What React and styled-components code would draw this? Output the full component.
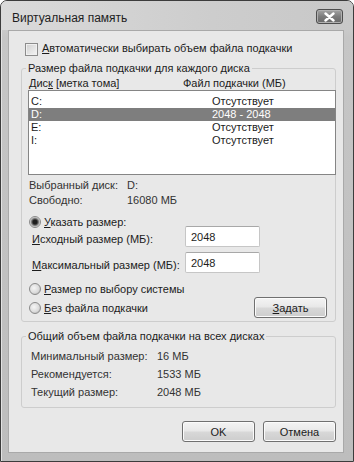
import styled, { createGlobalStyle } from "styled-components";

const GlobalStyle = createGlobalStyle`
  html, body {
    margin: 0;
    padding: 0;
    background: #ffffff;
  }
  body {
    font-family: "Liberation Sans", Arial, sans-serif;
    font-size: 11px;
    color: #1c1c1c;
  }
  * { box-sizing: border-box; }
`;

const drives = [
  { name: "C:", size: "Отсутствует" },
  { name: "D:", size: "2048 - 2048", selected: true },
  { name: "E:", size: "Отсутствует" },
  { name: "I:", size: "Отсутствует" },
];

const totals = [
  ["Минимальный размер:", "16 МБ"],
  ["Рекомендуется:", "1533 МБ"],
  ["Текущий размер:", "2048 МБ"],
];

export default function App() {
  return (
    <>
      <GlobalStyle />
      <Window>
        <TitleBar>
          <Title>Виртуальная память</Title>
          <CloseButton>
            <svg width="13" height="10" viewBox="0 0 13 10">
              <path d="M2.5 1.5 L10.5 8.5 M10.5 1.5 L2.5 8.5" stroke="#fff" strokeWidth="2.4" strokeLinecap="round" />
            </svg>
          </CloseButton>
        </TitleBar>

        <Client>
          <CheckRow>
            <CheckBox />
            <span>
              <U>А</U>втоматически выбирать объем файла подкачки
            </span>
          </CheckRow>

          <Group $mt={6} $pb={3}>
            <Legend>Размер файла подкачки для каждого диска</Legend>
            <HeaderRow>
              <span>
                Дис<U>к</U> [метка тома]
              </span>
              <span>Файл подкачки (МБ)</span>
            </HeaderRow>
            <ListBox>
              {drives.map((d) => (
                <DriveRow key={d.name} $selected={d.selected}>
                  <span>{d.name}</span>
                  <span>{d.size}</span>
                </DriveRow>
              ))}
            </ListBox>

            <InfoGrid>
              <span>Выбранный диск:</span>
              <span>D:</span>
              <span>Свободно:</span>
              <span>16080 МБ</span>
            </InfoGrid>

            <RadioRow $mt={7}>
              <Radio $checked />
              <span>
                <U>У</U>казать размер:
              </span>
            </RadioRow>

            <FieldRow $mt={-2}>
              <span>
                <U>И</U>сходный размер (МБ):
              </span>
              <Input defaultValue="2048" />
            </FieldRow>
            <FieldRow $mt={5}>
              <span>
                <U>М</U>аксимальный размер (МБ):
              </span>
              <Input defaultValue="2048" />
            </FieldRow>

            <RadioRow $mt={9}>
              <Radio />
              <span>
                <U>Р</U>азмер по выбору системы
              </span>
            </RadioRow>
            <LastRow>
              <RadioRow $mt={0}>
                <Radio />
                <span>
                  <U>Б</U>ез файла подкачки
                </span>
              </RadioRow>
              <Button $mr={8}>
                <U>З</U>адать
              </Button>
            </LastRow>
          </Group>

          <Group $mt={7} $pb={6}>
            <Legend>Общий объем файла подкачки на всех дисках</Legend>
            <TotalsGrid>
              {totals.map(([label, value]) => (
                <Pair key={label}>
                  <span>{label}</span>
                  <span>{value}</span>
                </Pair>
              ))}
            </TotalsGrid>
          </Group>

          <ButtonBar>
            <Button>OK</Button>
            <Button>Отмена</Button>
          </ButtonBar>
        </Client>
      </Window>
    </>
  );
}

const Pair = styled.div`
  display: contents;
`;

const Window = styled.div`
  width: 354px;
  height: 462px;
  display: flex;
  flex-direction: column;
  border: 1px solid #3c3c3c;
  border-radius: 7px 7px 0 0;
  background: linear-gradient(to bottom, #d6d6d6 0%, #c6c6c6 8%, #bdbdbd 100%);
  box-shadow: inset 1px 1px 0 #e2e2e2;
`;

const TitleBar = styled.div`
  flex-shrink: 0;
  height: 29px;
  display: flex;
  align-items: center;
  justify-content: space-between;
  padding: 0 10px 0 11px;
  background: linear-gradient(to right, #dadada 0%, #cdcdcd 60%, #c8c8c8 100%);
  border-radius: 6px 6px 0 0;
`;

const Title = styled.span`
  font-size: 12px;
  color: #1e1e1e;
  margin-top: 4px;
`;

const CloseButton = styled.div`
  width: 27px;
  height: 15px;
  margin-top: 2px;
  display: flex;
  align-items: center;
  justify-content: center;
  border: 1px solid #4e4e4e;
  border-radius: 3px;
  background: linear-gradient(to bottom, #a4a4a4 0%, #7c7c7c 50%, #686868 100%);
  box-shadow: inset 0 0 0 1px #b0b0b0;
`;

const Client = styled.div`
  flex: 1;
  min-height: 0;
  margin: 0 9px 8px 7px;
  display: flex;
  flex-direction: column;
  padding: 10px 7px 0 12px;
  background: #e8e8e8;
  border: 1px solid #a9a9a9;
`;

const U = styled.span`
  text-decoration: underline;
`;

const CheckRow = styled.div`
  display: flex;
  align-items: center;
  gap: 4px;
  height: 14px;
  padding-left: 4px;
`;

const CheckBox = styled.div`
  width: 13px;
  height: 13px;
  margin-top: 2px;
  border: 1px solid #8c8c8c;
  background: linear-gradient(135deg, #cfcfcf 0%, #e6e6e6 60%, #f4f4f4 100%);
  box-shadow: inset 0 0 0 1px #f0f0f0;
`;

const Group = styled.fieldset`
  margin: ${({ $mt }) => $mt}px 0 0;
  padding: 0 0 ${({ $pb }) => $pb}px 0;
  border: 1px solid #cdcdcd;
  border-radius: 3px;
  min-width: 0;
`;

const Legend = styled.legend`
  margin-left: 4px;
  padding: 0 2px;
  line-height: 14px;
  color: #1c1c1c;
`;

const HeaderRow = styled.div`
  display: grid;
  grid-template-columns: 154px 1fr;
  margin-top: 2px;
  padding-left: 7px;
  line-height: 13px;
`;

const ListBox = styled.div`
  margin-left: 6px;
  margin-right: -1px;
  height: 85px;
  padding-top: 4px;
  background: #ffffff;
  border: 1px solid #858585;
`;

const DriveRow = styled.div`
  display: grid;
  grid-template-columns: 181px 1fr;
  height: 13px;
  line-height: 13px;
  padding-left: 2px;
  color: ${({ $selected }) => ($selected ? "#ffffff" : "#1c1c1c")};
  background: ${({ $selected }) => ($selected ? "#7e7e7e" : "transparent")};
`;

const InfoGrid = styled.div`
  display: grid;
  grid-template-columns: 98px 1fr;
  margin-top: 3px;
  padding-left: 7px;
  line-height: 15px;
  color: #333;
`;

const RadioRow = styled.div`
  display: flex;
  align-items: center;
  gap: 3px;
  height: 13px;
  margin-top: ${({ $mt }) => $mt}px;
  padding-left: 7px;
`;

const Radio = styled.div`
  width: 12px;
  height: 12px;
  border-radius: 50%;
  border: 1px solid #8a8a8a;
  background: ${({ $checked }) =>
    $checked
      ? "radial-gradient(circle at 50% 50%, #1e1e1e 0 2px, #5a5a5a 3px, #9a9a9a 4px, #e0e0e0 5px)"
      : "radial-gradient(circle at 40% 40%, #f6f6f6 0, #dadada 5px, #c8c8c8 6px)"};
`;

const FieldRow = styled.div`
  display: grid;
  grid-template-columns: 153px 75px;
  align-items: center;
  height: 21px;
  margin-top: ${({ $mt }) => $mt}px;
  padding-left: 10px;

  & > span {
    padding-top: 4px;
  }
`;

const Input = styled.input`
  width: 75px;
  height: 21px;
  padding: 0 5px;
  font: inherit;
  color: #1c1c1c;
  background: #ffffff;
  border: 1px solid #c6c6c6;
  border-top-color: #a8a8a8;
  border-radius: 2px;
  outline: none;
`;

const LastRow = styled.div`
  display: flex;
  align-items: center;
  justify-content: space-between;
  height: 21px;
  margin-top: 2px;
`;

const Button = styled.div`
  width: 73px;
  height: 21px;
  margin-right: ${({ $mr }) => $mr || 0}px;
  display: flex;
  align-items: center;
  justify-content: center;
  border: 1px solid #707070;
  border-radius: 3px;
  background: linear-gradient(to bottom, #f4f4f4 0%, #e8e8e8 48%, #d8d8d8 52%, #cdcdcd 100%);
  box-shadow: inset 0 0 0 1px #fbfbfb;
  color: #1c1c1c;
`;

const TotalsGrid = styled.div`
  display: grid;
  grid-template-columns: 126px 1fr;
  margin-top: 4px;
  padding-left: 9px;
  line-height: 18px;
  color: #333;
`;

const ButtonBar = styled.div`
  display: flex;
  justify-content: flex-end;
  gap: 8px;
  margin-top: 13px;
`;
